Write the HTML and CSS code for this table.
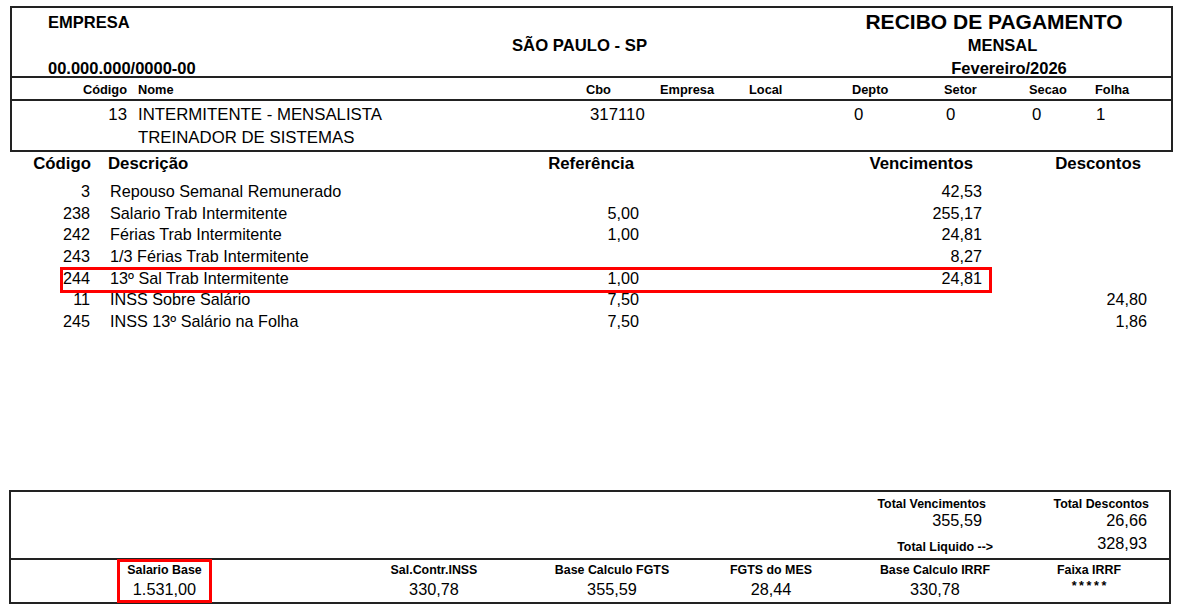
FILE: index.html
```html
<!DOCTYPE html>
<html lang="pt-BR">
<head>
<meta charset="utf-8">
<title>Recibo de Pagamento</title>
<link rel="stylesheet" href="styles.css">
</head>
<body>
<div class="page">
  <section class="top-box">
    <div class="head">
      <div class="head-left">
        <div class="company">EMPRESA</div>
        <div class="cnpj">00.000.000/0000-00</div>
      </div>
      <div class="head-mid">SÃO PAULO - SP</div>
      <div class="head-right">
        <div class="title">RECIBO DE PAGAMENTO</div>
        <div class="kind">MENSAL</div>
        <div class="month">Fevereiro/2026</div>
      </div>
    </div>
    <div class="emp-grid emp-labels">
      <div class="c-code">Código</div>
      <div class="c-name">Nome</div>
      <div>Cbo</div>
      <div>Empresa</div>
      <div>Local</div>
      <div>Depto</div>
      <div>Setor</div>
      <div>Secao</div>
      <div>Folha</div>
    </div>
    <div class="emp-grid emp-data">
      <div class="c-code">13</div>
      <div class="c-name">INTERMITENTE - MENSALISTA</div>
      <div class="d-cbo">317110</div>
      <div></div>
      <div></div>
      <div class="d-depto">0</div>
      <div class="d-setor">0</div>
      <div class="d-secao">0</div>
      <div class="d-folha">1</div>
      <div></div>
      <div class="c-name">TREINADOR DE SISTEMAS</div>
    </div>
  </section>

  <section class="items">
    <div class="item-grid item-head">
      <div class="i-code">Código</div>
      <div class="i-desc">Descrição</div>
      <div class="i-ref">Referência</div>
      <div class="i-venc">Vencimentos</div>
      <div class="i-disc">Descontos</div>
    </div>
    <div class="item-rows">
      <div class="item-grid row">
        <div class="i-code">3</div><div class="i-desc">Repouso Semanal Remunerado</div><div class="i-ref"></div><div class="i-venc">42,53</div><div class="i-disc"></div>
      </div>
      <div class="item-grid row">
        <div class="i-code">238</div><div class="i-desc">Salario Trab Intermitente</div><div class="i-ref">5,00</div><div class="i-venc">255,17</div><div class="i-disc"></div>
      </div>
      <div class="item-grid row">
        <div class="i-code">242</div><div class="i-desc">Férias Trab Intermitente</div><div class="i-ref">1,00</div><div class="i-venc">24,81</div><div class="i-disc"></div>
      </div>
      <div class="item-grid row">
        <div class="i-code">243</div><div class="i-desc">1/3 Férias Trab Intermitente</div><div class="i-ref"></div><div class="i-venc">8,27</div><div class="i-disc"></div>
      </div>
      <div class="item-grid row mark">
        <div class="i-code">244</div><div class="i-desc">13º Sal Trab Intermitente</div><div class="i-ref">1,00</div><div class="i-venc">24,81</div><div class="i-disc"></div>
      </div>
      <div class="item-grid row">
        <div class="i-code">11</div><div class="i-desc">INSS Sobre Salário</div><div class="i-ref">7,50</div><div class="i-venc"></div><div class="i-disc">24,80</div>
      </div>
      <div class="item-grid row">
        <div class="i-code">245</div><div class="i-desc">INSS 13º Salário na Folha</div><div class="i-ref">7,50</div><div class="i-venc"></div><div class="i-disc">1,86</div>
      </div>
    </div>
  </section>

  <section class="bottom-box">
    <div class="totals">
      <div></div>
      <div class="tot-a">
        <div class="lbl">Total Vencimentos</div>
        <div class="val">355,59</div>
        <div class="lbl liq">Total Liquido --&gt;</div>
      </div>
      <div class="tot-b">
        <div class="lbl">Total Descontos</div>
        <div class="val">26,66</div>
        <div class="val net">328,93</div>
      </div>
    </div>
    <div class="bases">
      <div class="base b1 highlight"><div class="lbl">Salario Base</div><div class="val">1.531,00</div></div>
      <div class="base b2"><div class="lbl">Sal.Contr.INSS</div><div class="val">330,78</div></div>
      <div class="base b3"><div class="lbl">Base Calculo FGTS</div><div class="val">355,59</div></div>
      <div class="base b4"><div class="lbl">FGTS do MES</div><div class="val">28,44</div></div>
      <div class="base b5"><div class="lbl">Base Calculo IRRF</div><div class="val">330,78</div></div>
      <div class="base b6"><div class="lbl">Faixa IRRF</div><div class="stars">*****</div></div>
    </div>
  </section>
</div>
</body>
</html>
```

FILE: styles.css
```css
*, *::before, *::after { box-sizing: border-box; }
html, body { margin: 0; padding: 0; background: #fff; }
body {
  font-family: "Liberation Sans", Arial, sans-serif;
  color: #000;
  width: 1180px;
  height: 612px;
  overflow: hidden;
}
.page { padding: 6px 0 0 10px; }

/* ---------- top box ---------- */
.top-box {
  width: 1163px;
  height: 146px;
  border: 2px solid #222;
}
.head {
  height: 70px;
  border-bottom: 2px solid #222;
  display: grid;
  grid-template-columns: 400px 338px 1fr;
  font-weight: bold;
}
.head-left { padding: 4px 0 0 36px; }
.company { font-size: 16.5px; line-height: 20px; }
.cnpj { font-size: 16.5px; line-height: 20px; margin-top: 26px; }
.head-mid {
  text-align: center;
  padding: 28px 3px 0 0;
  font-size: 16.7px;
  line-height: 20px;
}
.head-right {
  padding: 2px 0 0 80px;
  text-align: center;
}
.title { font-size: 21px; line-height: 24px; padding-right: 13px; }
.kind { font-size: 16.5px; line-height: 23px; padding-left: 4px; }
.month { font-size: 16.5px; line-height: 23px; padding-left: 17px; }

.emp-grid {
  display: grid;
  grid-template-columns: 115px 459px 74px 89px 103px 92px 85px 66px 1fr;
}
.emp-labels {
  height: 23px;
  padding-top: 2px;
  border-bottom: 2px solid #222;
  font-size: 12.8px;
  font-weight: bold;
  line-height: 19px;
}
.c-code { text-align: right; }
.c-name { padding-left: 11px; }
.emp-data {
  padding-top: 2px;
  font-size: 16.8px;
  line-height: 23px;
}
.d-cbo { padding-left: 4px; }
.d-depto { padding-left: 2px; }
.d-setor { padding-left: 2px; }
.d-secao { padding-left: 3px; }
.d-folha { padding-left: 1px; }

/* ---------- items ---------- */
.items {
  height: 338px;
  padding-top: 2px;
}
.item-grid {
  display: grid;
  grid-template-columns: 80px 310px 239px 343px 165px;
}
.i-code, .i-ref, .i-venc, .i-disc { text-align: right; }
.i-desc { padding-left: 20px; }
.item-head {
  font-size: 16.8px;
  font-weight: bold;
  line-height: 20px;
}
.item-head .i-code { margin-right: -1px; }
.item-head .i-desc { padding-left: 18px; }
.item-head .i-ref { padding-right: 5px; }
.item-head .i-venc { padding-right: 9px; }
.item-head .i-disc { padding-right: 6px; }
.item-rows { padding-top: 7px; }
.row {
  position: relative;
  font-size: 16.2px;
  line-height: 21.67px;
}
.row.mark::after {
  content: "";
  position: absolute;
  left: 50px;
  top: -1px;
  width: 932px;
  height: 26px;
  border: 3px solid #ff0000;
}

/* ---------- bottom box ---------- */
.bottom-box {
  margin-left: -1px;
  width: 1162px;
  height: 114px;
  border: 2px solid #222;
}
.lbl { font-size: 12.4px; font-weight: bold; line-height: 14px; }
.val { font-size: 16.3px; line-height: 18px; }
.totals {
  height: 68px;
  border-bottom: 2px solid #222;
  display: grid;
  grid-template-columns: 1fr 187px 156px;
  padding-right: 20px;
}
.tot-a, .tot-b { text-align: right; padding-top: 5px; }
.tot-a .lbl { padding-right: 7px; }
.tot-a .val { padding-right: 11px; }
.tot-a .liq { margin-top: 11px; padding-right: 0; }
.tot-b .val { padding-right: 2px; }
.tot-b .net { margin-top: 5px; }

.bases { display: flex; height: 42px; }
.base { text-align: center; padding-top: 3px; }
.base .val { margin-top: 3px; }
.b1 { margin-left: 106px; width: 95px; }
.b2 { margin-left: 147px; width: 150px; }
.b3 { margin-left: 28px; width: 150px; }
.b4 { margin-left: 19px; width: 130px; }
.b5 { margin-left: 24px; width: 150px; }
.b6 { margin-left: 24px; width: 110px; }
.stars {
  font-size: 12.5px;
  font-weight: bold;
  line-height: 18px;
  letter-spacing: 2.6px;
  padding-left: 2.6px;
}
.highlight { position: relative; }
.highlight::after {
  content: "";
  position: absolute;
  left: 0;
  right: 0;
  top: -1px;
  bottom: -1px;
  border: 3px solid #ff0000;
}
```
